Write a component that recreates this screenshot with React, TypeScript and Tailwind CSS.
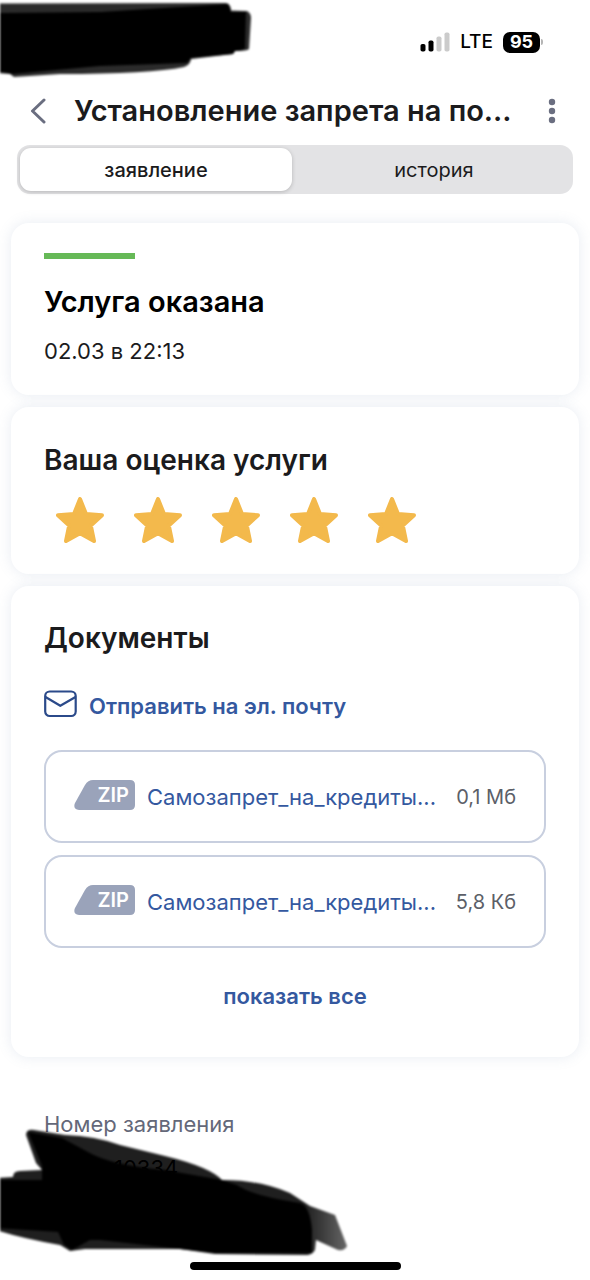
import * as React from "react";
import clsx from "clsx";

const tabs = [
  { id: "application", label: "заявление" },
  { id: "history", label: "история" },
];

const files = [
  { id: "archive", name: "Самозапрет_на_кредиты...", size: "0,1 Мб" },
  { id: "signature", name: "Самозапрет_на_кредиты...", size: "5,8 Кб" },
];

export default function App() {
  const [tab, setTab] = React.useState("application");

  return (
    <main className="relative w-full overflow-hidden bg-white font-[Inter,'Liberation_Sans',sans-serif] text-[#1b1b1d]">
      <StatusBar />

      <header className="flex h-[54px] items-center pr-7 pl-[22px]">
        <button type="button" aria-label="Назад" className="grid h-10 w-8 shrink-0 place-items-center">
          <svg viewBox="0 0 16 26" className="h-[26px] w-4" fill="none" stroke="#6a6e80" strokeWidth="3" aria-hidden>
            <path d="M14 2 2.500 13 14 24" strokeLinecap="round" strokeLinejoin="round" />
          </svg>
        </button>
        <h1 className="ml-5 flex-1 text-[29px] leading-9 font-semibold whitespace-nowrap">
          Установление запрета на по...
        </h1>
        <button type="button" aria-label="Меню" className="grid h-10 w-5 shrink-0 place-items-center">
          <svg viewBox="0 0 8 26" className="h-[26px] w-2" fill="#6a6e80" aria-hidden>
            <circle cx="4" cy="4" r="3.2" />
            <circle cx="4" cy="13" r="3.2" />
            <circle cx="4" cy="22" r="3.2" />
          </svg>
        </button>
      </header>

      <div
        role="tablist"
        className="mx-[17px] mt-[7px] grid h-[49px] grid-cols-2 gap-1.5 rounded-[13px] bg-[#e3e3e5] p-[3px]"
      >
        {tabs.map((t) => (
          <button
            key={t.id}
            type="button"
            role="tab"
            aria-selected={tab === t.id}
            onClick={() => setTab(t.id)}
            className={clsx(
              "rounded-[11px] text-[20px] leading-7",
              tab === t.id ? "bg-white font-medium shadow-[0_1px_4px_rgba(0,0,0,0.2)]" : "font-normal",
            )}
          >
            {t.label}
          </button>
        ))}
      </div>

      <div className="mt-[29px] flex flex-col gap-3 px-[11px]">
        {/* Result */}
        <Card className="pt-[30px] pb-[30px]">
          <div className="h-1.5 w-[91px] bg-[#66b957]" />
          <h2 className="mt-[25px] text-[29px] leading-9 font-semibold text-black">Услуга оказана</h2>
          <p className="mt-[17px] text-[22px] leading-7">02.03 в 22:13</p>
        </Card>

        {/* Rating */}
        <Card className="pt-[35px] pb-[31px]">
          <h2 className="text-[28px] leading-9 font-semibold">Ваша оценка услуги</h2>
          <div className="mt-[19px] flex gap-[30px] pl-3">
            {[1, 2, 3, 4, 5].map((n) => (
              <button key={n} type="button" aria-label={`Оценка ${n}`}>
                <Star />
              </button>
            ))}
          </div>
        </Card>

        {/* Documents */}
        <Card className="pt-[34px] pb-[47px]">
          <h2 className="text-[28px] leading-9 font-semibold">Документы</h2>
          <a
            href="#email"
            className="mt-[34px] flex h-8 items-center gap-3 text-[22px] leading-7 font-semibold text-[#34589f]"
          >
            <MailIcon />
            Отправить на эл. почту
          </a>
          <ul className="mt-7 flex flex-col gap-3">
            {files.map((f) => (
              <li key={f.id}>
                <a
                  href={`#${f.id}`}
                  className="flex h-[93px] items-center rounded-[18px] border-2 border-[#c8cfdf] px-7"
                >
                  <ZipBadge />
                  <span className="ml-3 flex-1 text-[22px] leading-7 whitespace-nowrap text-[#34589f]">{f.name}</span>
                  <span className="text-[20px] leading-7 whitespace-nowrap text-[#5c5f68]">{f.size}</span>
                </a>
              </li>
            ))}
          </ul>
          <button type="button" className="mx-auto mt-[34px] block text-[22px] leading-7 font-semibold text-[#34589f]">
            показать все
          </button>
        </Card>
      </div>

      <footer className="relative pt-[53px] pb-2.5">
        <p className="pl-11 text-[22px] leading-7 text-[#646879]">Номер заявления</p>
        <p className="mt-4 pl-[114px] text-[22px] leading-7 text-black">10334</p>
        <svg viewBox="0 0 360 180" className="absolute top-8 left-0 h-[180px] w-[360px] blur-[1px]" aria-hidden>
          <defs>
            <linearGradient id="stroke-fade" x1="0" x2="1" y1="0" y2="0">
              <stop offset="0.88" stopOpacity="0.88" />
              <stop offset="1" stopOpacity="0.6" />
            </linearGradient>
          </defs>
          <path
            fill="url(#stroke-fade)"
            d="M26 46Q26 40 34 41L65 46Q95 47 120 56L165 67Q210 78 222 91Q260 91 290 104L310 117L335 126L347 157Q345 162 338 161L316 151L315 161Q313 165 308 166L215 165L180 160L85 160L70 162Q62 157 60 156Q20 149-4 141V89L13 88Q13 82 20 82L42 81L36 74Z"
          />
          <path d="M28 43L62 49L88 63Q110 76 165 81L222 91L237 96Q250 106 300 114Q310 117 312 141V164H215L180 160L100 151H90L72 161L64 156L58 143L-4 139V91H42V77Z" />
        </svg>
        <div className="mx-auto mt-20 h-2 w-[211px] rounded-full bg-black" />
      </footer>
    </main>
  );
}

function StatusBar() {
  return (
    <div className="relative flex h-[84px] items-center justify-end pr-[47px]">
      <svg viewBox="0 0 260 84" className="absolute top-0 left-0 h-[84px] w-[260px] blur-[1px]" aria-hidden>
        <path
          opacity="0.83"
          d="M-4 3.500L226 3Q231 4 231 10.500L247 11Q251 13 251 18L249 49Q247 51 235 51L233 54L191 59Q191 64 184 67Q150 74 60 74L14 77L10 74L-4 73Z"
        />
        <path d="M-4 13L100 12L228 4L231 12H246L245 49L235 51L233 54L191 58L187 63L100 66L13 74L-4 71Z" />
      </svg>
      <svg viewBox="0 0 30 20" className="h-5 w-[30px]" aria-hidden>
        <rect x="0.500" y="12" width="5" height="7.500" rx="1.800" />
        <rect x="8.500" y="8.500" width="5" height="11" rx="1.800" />
        <rect x="16.500" y="4.500" width="5" height="15" rx="1.800" fill="#cbcbcb" />
        <rect x="24.500" y="0.500" width="5" height="19" rx="1.800" fill="#cbcbcb" />
      </svg>
      <span className="ml-2.5 text-[19px] leading-6 font-medium text-black">LTE</span>
      <span className="ml-2.5 grid h-[21px] w-[37px] place-items-center rounded-[7px] bg-black text-[18px] leading-5 font-bold text-white">
        95
      </span>
      <span className="ml-px h-1.5 w-0.5 rounded-r-full bg-[#b5b5b5]" />
    </div>
  );
}

function Card({ className, children }: { className?: string; children: React.ReactNode }) {
  return (
    <section className={clsx("rounded-[18px] bg-white px-[33px] shadow-[0_0_14px_rgba(110,135,175,0.16)]", className)}>
      {children}
    </section>
  );
}

function Star() {
  return (
    <svg viewBox="0 0 48 46" className="h-[46px] w-12" fill="#f3b94c" stroke="#f3b94c" strokeWidth="4" aria-hidden>
      <path d="M24 2 30 17 46 18.200 34.800 28.500 38 44 24 36.200 10 44 13.200 28.500 2 18.200 18 17Z" strokeLinejoin="round" />
    </svg>
  );
}

function MailIcon() {
  return (
    <svg viewBox="0 0 33 28" className="mb-1 h-7 w-[33px]" fill="none" stroke="#2b4a8a" strokeWidth="2.200" aria-hidden>
      <rect x="1.200" y="1.500" width="30.500" height="24.500" rx="4.500" />
      <path d="M1.500 7l14.800 8.800L31.500 7" strokeLinejoin="round" />
    </svg>
  );
}

function ZipBadge() {
  return (
    <span className="relative mb-1 block h-[30px] w-[61px] shrink-0">
      <svg viewBox="0 0 61 30" className="h-[30px] w-[61px]" fill="#9aa3ba" aria-hidden>
        <path d="M19 0H56Q61 0 61 5V25Q61 30 56 30H5Q-1.500 29 1 23L11 5Q14 0 19 0Z" />
      </svg>
      <span className="absolute top-0 right-1.5 text-[20px] leading-[30px] font-semibold text-white">ZIP</span>
    </span>
  );
}
